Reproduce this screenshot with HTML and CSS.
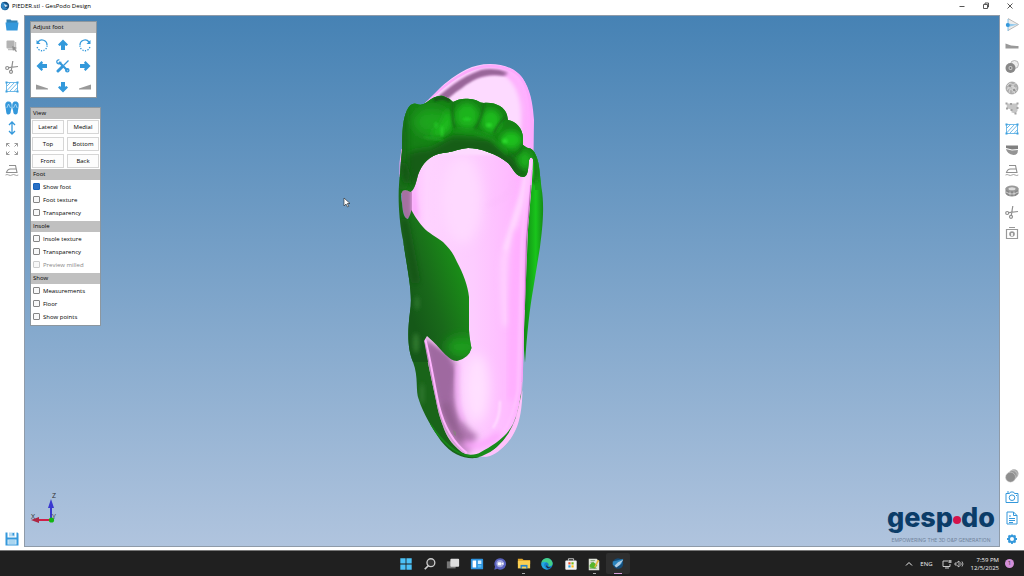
FILE: index.html
```html
<!DOCTYPE html>
<html lang="en">
<head>
<meta charset="utf-8">
<title>PIEDER.stl - GesPodo Design</title>
<link rel="stylesheet" href="styles.css">
</head>
<body>
<svg class="defs" aria-hidden="true">
  <symbol id="texture" viewBox="0 0 14 14"><path d="M1.500 2.500h11v9h-11zM2 10.500 9 3M5 11l7.500-8M2 6l3.500-3.500M9 11.500l3.500-4" fill="none" stroke="#4da8e2" stroke-width=".8"/><path d="M.5 1.500h2v2h-2zM11.500 1.500h2v2h-2zM.5 10.500h2v2h-2zM11.500 10.500h2v2h-2z" fill="#3da0de"/></symbol>
  <symbol id="scissors" viewBox="0 0 14 14"><g fill="none" stroke="#8f8f8f" stroke-width="1.200"><circle cx="2.200" cy="8" r="1.500"/><circle cx="6" cy="11.800" r="1.500"/><path d="M3.700 7.700 13 6.500M6.300 10.300 7.800 1"/></g></symbol>
  <symbol id="iron" viewBox="0 0 14 14"><path d="M4 2.500h6.500l1.500 7H1.500Q2.500 6 5.500 6h5.500" fill="none" stroke="#8f8f8f" stroke-width="1.100"/><path d="M.5 12q1.600-1 3.200 0t3.200 0t3.200 0t3.200 0" fill="none" stroke="#999" stroke-width=".9"/></symbol>
  <symbol id="arrow" viewBox="0 0 14 14"><path d="M7 1.500 12 6.500 10.500 8 9 7.200V12H5V7.200L3.500 8 2 6.500z" fill="#3399db"/></symbol>
  <symbol id="wedge" viewBox="0 0 14 14"><path d="M1 4.500 13 8.500v1H1z" fill="#999"/></symbol>
  <symbol id="turn" viewBox="0 0 14 14"><path d="M3 4A5 5 0 0 1 12 7" fill="none" stroke="#3399db" stroke-width="1.300"/><path d="M12 7.500A5 5 0 0 1 2 8" fill="none" stroke="#3399db" stroke-width="1.300" stroke-dasharray="1.300 1.300"/><path d="M1.500 2v4h4z" fill="#3399db"/></symbol>
</svg>

<header class="titlebar">
  <svg class="app-icon" viewBox="0 0 10 10"><circle cx="5" cy="5" r="4.200" fill="#174f80"/><path d="M2 1 8 4 4 5.500 8 8 3 9 1 5z" fill="#2f86c5"/><path d="M4 3l4 2-3 1z" fill="#dceaf6"/></svg>
  <h1 class="title">PIEDER.stl - GesPodo Design</h1>
  <div class="window-controls">
    <button class="win-btn" aria-label="Minimize"><svg viewBox="0 0 10 10"><path d="M2.500 5.500h5" stroke="#555" /></svg></button>
    <button class="win-btn" aria-label="Restore"><svg viewBox="0 0 10 10"><path d="M2.500 3.500h4v4h-4zM4 3V2h3.500v4H7" fill="none" stroke="#444" stroke-width=".9"/></svg></button>
    <button class="win-btn" aria-label="Close"><svg viewBox="0 0 10 10"><path d="M2.500 2.500l5 5M7.500 2.500l-5 5" stroke="#444" stroke-width=".9"/></svg></button>
  </div>
</header>

<main class="workspace">
  <nav class="sidebar" aria-label="File and foot tools">
    <div class="tools tools-left">
      <button class="tool" aria-label="Open"><svg viewBox="0 0 14 14"><path d="M1.500 1.500h4l1 1h6v2.500h-11z" fill="#3382b3"/><path d="M.5 4.500h13l-1 8h-11z" fill="#3498db"/></svg></button>
      <button class="tool" aria-label="Select"><svg viewBox="0 0 14 14"><rect x="1.500" y="1.500" width="8" height="8" rx="1" fill="#b3b3b3"/><path d="M3 10.500h7.500V3" fill="none" stroke="#c2c2c2" stroke-width="1.500"/><path d="M7 7l5 2-2 .8 2 2.400-1 .8-2-2.500-1 1.500z" fill="#909090"/></svg></button>
      <button class="tool" aria-label="Cut"><svg><use href="#scissors"/></svg></button>
      <button class="tool" aria-label="Texture"><svg><use href="#texture"/></svg></button>
      <button class="tool" aria-label="Insoles"><svg viewBox="0 0 14 14"><path d="M3.400.5C.6.500 0 3 .4 5.500S1 9 1.200 11s1 2.500 2.200 2.500 2.300-1 2.300-2.500S6.700 7.500 6.800 5 6 .5 3.400.5z" fill="#3498db"/><path d="M13.600 5.500C14 3 13.400.5 10.600.5S7.200 2.500 7.200 5s1.100 4.500 1.100 6 1 2.500 2.300 2.500 2.100-1 2.200-2.500.4-3 .8-5.500z" fill="#3498db"/><path d="M1.800 7 3.500 3 5.500 7M8.500 7l2-4 1.700 4" fill="none" stroke="#c9e5f8" stroke-width=".7"/></svg></button>
      <button class="tool" aria-label="Length"><svg viewBox="0 0 14 14"><path d="M7 1v12M4 4l3-3 3 3M4 10l3 3 3-3" fill="none" stroke="#3498db" stroke-width="1.300"/></svg></button>
      <button class="tool" aria-label="Fit to view"><svg viewBox="0 0 14 14"><path d="M1.500 4.500v-3h3M1.500 1.500l3 3M9.500 1.500h3v3M12.500 1.500l-3 3M1.500 9.500v3h3M1.500 12.500l3-3M12.500 9.500v3h-3M12.500 12.500l-3-3" fill="none" stroke="#999"/></svg></button>
      <button class="tool" aria-label="Smooth"><svg><use href="#iron"/></svg></button>
    </div>
    <div class="tools tools-save">
      <button class="tool" aria-label="Save"><svg viewBox="0 0 14 14"><path d="M.5.500h2v5h9v-5h1l1 1v12H.5z" fill="#3498db"/><path d="M4 .5h6v4H4z" fill="#b5daf2"/><path d="M7.500 1h1.500v2.500H7.500z" fill="#3498db"/><path d="M2.500 7.500h9v5h-9z" fill="#d8edf9"/><path d="M3.500 9h7M3.500 11h7" stroke="#65b2e3" stroke-width=".8"/></svg></button>
    </div>
  </nav>

  <section class="viewport" aria-label="3D view">
    <svg class="scene" viewBox="24 15 976 532" role="img" aria-label="Foot scan with insole">
      <defs>
        <linearGradient id="pinkBody" x1="400" x2="534" y1="0" y2="0" gradientUnits="userSpaceOnUse"><stop offset="0" stop-color="#ffb5ff"/><stop offset=".2" stop-color="#fed3ff"/><stop offset=".55" stop-color="#fdccff"/><stop offset=".8" stop-color="#febcff"/><stop offset="1" stop-color="#ffaaff"/></linearGradient>
        <linearGradient id="archFill" x1="402" x2="472" y1="290" y2="265" gradientUnits="userSpaceOnUse"><stop offset="0" stop-color="#155818"/><stop offset=".35" stop-color="#19691a"/><stop offset=".8" stop-color="#1a8a18"/><stop offset="1" stop-color="#1aa31a"/></linearGradient>
        <linearGradient id="side" x1="525" x2="543" y1="0" y2="0" gradientUnits="userSpaceOnUse"><stop offset="0" stop-color="#128c16"/><stop offset=".6" stop-color="#19c51b"/><stop offset="1" stop-color="#168d18"/></linearGradient>
        <filter id="b1" x="-50%" y="-50%" width="200%" height="200%"><feGaussianBlur stdDeviation="1"/></filter>
        <filter id="b2" x="-60%" y="-60%" width="220%" height="220%"><feGaussianBlur stdDeviation="2"/></filter>
        <filter id="b3" x="-80%" y="-80%" width="260%" height="260%"><feGaussianBlur stdDeviation="3"/></filter>
        <filter id="b6" x="-80%" y="-80%" width="260%" height="260%"><feGaussianBlur stdDeviation="6"/></filter>
        <path id="insole" d="M425 103C434 95 440 87 447 82C460 72 472 64 490 64C506 64 519 70 525 82C532 95 533 108 534 120L533.500 150L532 180L528 230L526 280L524 330L523 370C522 395 521 415 516 428C510 441 501 452 490 456C483 458 476 456 470 455C463 454 460 451 456 447C449 441 445 432 443 426C438 413 437 405 435 396L428 363L424 341Q423 335 427 336L440 300L412 220L400 190L412 140z"/>
        <path id="fore" d="M402 150C402 130 403 119 407 110Q411 102 417 104Q422 106 427 102C433 97 439 95 443 96Q449 98 453 102C458 99 464 98 470 99C477 99 479 103 484 103C495 102 505 107 507 115L508 120C516 121 523 129 523 138L523 145Q527 148 528 148C535 148 539 160 540 175L541 190H535L534 163Q532 154 529 160C528 166 529 177 523 177C516 177 513 168 508 163C497 154 480 148 468 148C457 149 450 153 443 153C429 155 422 164 418 175C416 183 414 191 410.500 192Q406 189 402.500 191Q400 195 402 203Q403 219 408 219Q410 216 411.500 210C414 215 417 220 423 227C428 233 437 237 443 242C450 249 453 253 457 262C463 273 468 286 469 297L469 330Q470 342 471.500 348Q469 358 457 361C449 361 442 350 433 341.500L427 336L424 341L428 362L413 362C408 350 407 335 410 312C413 294 408 274 403 240C399 220 398 200 399 185z"/>
        <path id="heel" d="M403 240C408 274 413 294 410 312C407 335 408 350 413 362C419 378 415 390 419 400C423 413 432 428 441 441C452 455 464 459 476 458C489 455 501 446 510 434L521 400L440 396L424 340z"/>
        <clipPath id="clipInsole"><use href="#insole"/></clipPath>
        <clipPath id="clipFore"><use href="#fore"/></clipPath>
        <clipPath id="clipHeel"><use href="#heel"/></clipPath>
      </defs>

      <path d="M524 142C533 147 538 157 539 167L541.500 188C545 207 542 232 540 247L533 290Q528 318 525 363L520 300z" fill="url(#side)"/>
      <path d="M537 165Q540 185 537 186L533 182z" fill="#156c18" filter="url(#b1)"/>
      <use href="#heel" fill="#196419"/>
      <g clip-path="url(#clipHeel)"><ellipse cx="422" cy="394" rx="2" ry="11" fill="#337a31" filter="url(#b2)"/><path d="M430 424Q449 452 468 456Q489 456 504 440" fill="none" stroke="#168719" stroke-width="2"/></g>

      <use href="#insole" fill="url(#pinkBody)"/>
      <g clip-path="url(#clipInsole)">
        <path d="M440 104L465 84Q484 73 506 76Q520 82 524 108L522 155H430z" fill="#fddaff" filter="url(#b1)"/>
        <path d="M428 105C446 90 460 77 481 70Q494 67 507 72Q511 76 503 76C486 73 473 79 462 88Q449 96 441 107z" fill="#99669a" filter="url(#b1)"/>
        <path d="M425 103C438 92 463 66 490 66Q517 67 524 83C531 97 532 112 532 150" fill="none" stroke="#fdaafd" stroke-width="2.500"/>
        <path d="M506 73Q524 86 524 120L522 151" fill="none" stroke="#fdb0fd" stroke-width="5" filter="url(#b2)"/>
        <ellipse cx="462" cy="200" rx="20" ry="44" fill="#fed9ff" filter="url(#b6)"/>
        <path d="M486 206Q500 201 508 194Q512 190 514 180" fill="none" stroke="#f9baf9" stroke-width="2" filter="url(#b3)"/>
        <path d="M531 155L525 194Q511 230 504 260Q503 290 506 326" fill="none" stroke="#ffd8ff" stroke-width="5" filter="url(#b3)"/>
        <path d="M529 163L519 205L505 250" fill="none" stroke="#ffe9ff" stroke-width="2" filter="url(#b2)"/>
        <path d="M519 230L514 300L512 400" fill="none" stroke="#ffaeff" stroke-width="9" filter="url(#b3)"/>
        <path d="M532 170L526 240L524 310L522 382" fill="none" stroke="#f4a0f6" stroke-width="1.500"/>
        <path d="M528 168L522 240L520 310L518 390Q512 424 497 441" fill="none" stroke="#ffc3ff" stroke-width="2" filter="url(#b1)"/>
        <path d="M531 185L526.500 242L525 310" fill="none" stroke="#94648f" stroke-width=".8"/>
        <path d="M420 335L446 354L456 362L457 405Q461 425 478 436L467 455Q446 440 438 413z" fill="#b077b1" filter="url(#b3)"/>
        <path d="M427 341L448 356L454 371L451 397L458 432Q443 420 437 393z" fill="#9f69a0" filter="url(#b2)"/>
        <path d="M445 403Q450 425 462 440" fill="none" stroke="#8b5b88" stroke-width="5" filter="url(#b3)"/>
        <path d="M458 365Q455 402 464 421" fill="none" stroke="#fbacff" stroke-width="3" filter="url(#b2)"/>
        <ellipse cx="477" cy="388" rx="12" ry="34" fill="#ffe0ff" filter="url(#b6)"/>
        <path d="M464 444Q480 451 500 434" fill="none" stroke="#fba5fc" stroke-width="7" filter="url(#b3)"/>
        <path d="M500 401Q500 419 493 428" fill="none" stroke="#ffe0ff" stroke-width="2" filter="url(#b1)"/>
        <path d="M425 338C431 361 434 384 439 406Q447 438 467 453" fill="none" stroke="#ffb4ff" stroke-width="2"/>
        <path d="M453 430l3 2v4l-2-1z" fill="#8c7c86"/>
      </g>
      <path d="M522 380Q521 407 513 424C505 439 491 446 481 452Q475 456 464 454Q472 460 482 456Q498 450 508 434Q517 420 521 397z" fill="#198c1c"/>
      <path d="M522.500 390Q522 416 516 429C510 443 500 452 484 457Q506 443 515 423z" fill="#ffc2fb"/>
      <path d="M402 149Q399 162 400 177" fill="none" stroke="#f6a4f4"/>
      <path d="M402.500 191Q406 189 412 192V211Q410 219 406 219Q401 210 402 191z" fill="#a571a1"/>
      <path d="M412 188L415 184L419 220L412 212z" fill="#fba8fc" filter="url(#b2)"/>

      <use href="#fore" fill="url(#archFill)"/>
      <g clip-path="url(#clipFore)">
        <path d="M402 90H540V180H510L470 152L405 165z" fill="#188018" filter="url(#b3)"/>
        <ellipse cx="432" cy="122" rx="19" ry="14" fill="#1ba51c" filter="url(#b6)"/>
        <path d="M447 108Q455 119 450 130Q442 138 430 135L442 122z" fill="#1bbb1c" filter="url(#b3)"/>
        <path d="M400 160Q405 150 430 149L452 137L490 139L514 158L531 180L465 156L430 162L414 190z" fill="#165d18" filter="url(#b3)"/>
        <path d="M424 137L443 140" stroke="#20a522" stroke-width="1.500" filter="url(#b1)"/>
        <ellipse cx="467" cy="116" rx="12" ry="13" fill="#1bb41c" filter="url(#b3)"/>
        <ellipse cx="491" cy="121" rx="10" ry="12" fill="#1aba1c" filter="url(#b3)"/>
        <ellipse cx="511" cy="140" rx="11" ry="9" fill="#1ac01c" filter="url(#b3)"/>
        <ellipse cx="525" cy="160" rx="7" ry="9" fill="#1aae1c" filter="url(#b3)"/>
        <path d="M453 101Q451 117 455 130M484 102Q482 119 475 129M507 116Q499 122 494 133M523 145Q520 154 512 156" fill="none" stroke="#166e18" stroke-width="2" filter="url(#b1)"/>
        <path d="M453 130L475 132L491 138L508 154" fill="none" stroke="#1a9c1c" stroke-width="3" filter="url(#b2)"/>
        <path d="M434 100Q444 95 450 101" fill="none" stroke="#145719" stroke-width="4" filter="url(#b1)"/>
        <ellipse cx="442" cy="131" rx="1.500" ry="6" fill="#25c925" filter="url(#b1)"/><ellipse cx="436" cy="125" rx="1.500" ry="3" fill="#24c025" filter="url(#b1)"/><ellipse cx="467" cy="119" rx="4" ry="1.500" fill="#26cc28" filter="url(#b1)"/><ellipse cx="489" cy="125" rx="3" ry="2" fill="#2cd52c" filter="url(#b1)"/><ellipse cx="505" cy="141" rx="3" ry="2.500" fill="#2ad52a" filter="url(#b1)"/>
        <ellipse cx="403" cy="145" rx="5" ry="46" fill="#166b18" filter="url(#b3)"/>
        <path d="M402 163L408 183M404 219L416 283" stroke="#124e16" stroke-width="5" filter="url(#b3)"/>
        <ellipse cx="417" cy="303" rx="2" ry="7" fill="#2f7a2f" filter="url(#b2)"/>
        <ellipse cx="462" cy="347" rx="16" ry="10" fill="#1a9f1b" filter="url(#b6)"/>
        <ellipse cx="416" cy="343" rx="3" ry="10" fill="#307a2f" filter="url(#b2)"/>
      </g>

      <g class="axes"><path d="M51 519V507" stroke="#3939d0" stroke-width="2"/><path d="M51 499l3 9h-6z" fill="#3939d0"/><path d="M50 520H38" stroke="#cf1e48" stroke-width="2"/><path d="M31 520l8-3v6z" fill="#ad2643"/><circle cx="51.500" cy="520" r="2.600" fill="#12b512"/><text x="52" y="498">Z</text><text x="31" y="519">X</text><text x="52" y="519">Y</text></g>
      <path d="M344 198v8l2-2 1.500 3 1.200-.6-1.400-2.900h2.700z" fill="#fff" stroke="#222" stroke-width=".6"/>
    </svg>

    <div class="panels">
      <section class="panel panel-adjust">
        <h2 class="panel-head">Adjust foot</h2>
        <div class="adjust-grid">
          <button class="adjust" aria-label="Rotate left"><svg><use href="#turn"/></svg></button>
          <button class="adjust" aria-label="Move up"><svg><use href="#arrow"/></svg></button>
          <button class="adjust" aria-label="Rotate right"><svg class="flip"><use href="#turn"/></svg></button>
          <button class="adjust" aria-label="Move left"><svg class="left"><use href="#arrow"/></svg></button>
          <button class="adjust" aria-label="Settings"><svg viewBox="0 0 14 14"><path d="M3 3l8.500 8.500" stroke="#3498db" stroke-width="2.200"/><circle cx="2.800" cy="2.800" r="2" fill="none" stroke="#3498db" stroke-width="1.300" stroke-dasharray="9 4"/><circle cx="11.300" cy="11.300" r="1.600" fill="none" stroke="#3498db" stroke-width="1.400"/><path d="M12.500 1.500 7.500 6.500" stroke="#3498db" stroke-width="1.300"/><path d="M5.800 8.200 2 12" stroke="#3498db" stroke-width="3" stroke-linecap="round"/></svg></button>
          <button class="adjust" aria-label="Move right"><svg class="right"><use href="#arrow"/></svg></button>
          <button class="adjust" aria-label="Tilt left"><svg><use href="#wedge"/></svg></button>
          <button class="adjust" aria-label="Move down"><svg class="down"><use href="#arrow"/></svg></button>
          <button class="adjust" aria-label="Tilt right"><svg class="flip"><use href="#wedge"/></svg></button>
        </div>
      </section>

      <section class="panel panel-view">
        <h2 class="panel-head">View</h2>
        <div class="view-grid">
          <button class="view-btn">Lateral</button><button class="view-btn">Medial</button>
          <button class="view-btn">Top</button><button class="view-btn">Bottom</button>
          <button class="view-btn">Front</button><button class="view-btn">Back</button>
        </div>
        <h2 class="panel-head">Foot</h2>
        <div class="checks">
          <label class="check"><input type="checkbox" checked>Show foot</label>
          <label class="check"><input type="checkbox">Foot texture</label>
          <label class="check"><input type="checkbox">Transparency</label>
        </div>
        <h2 class="panel-head">Insole</h2>
        <div class="checks">
          <label class="check"><input type="checkbox">Insole texture</label>
          <label class="check"><input type="checkbox">Transparency</label>
          <label class="check check-off"><input type="checkbox" disabled>Preview milled</label>
        </div>
        <h2 class="panel-head">Show</h2>
        <div class="checks">
          <label class="check"><input type="checkbox">Measurements</label>
          <label class="check"><input type="checkbox">Floor</label>
          <label class="check"><input type="checkbox">Show points</label>
        </div>
      </section>
    </div>

    <div class="brand">
      <div class="brand-name"><span>gesp</span><i class="brand-dot"></i><span>do</span></div>
      <div class="brand-line">EMPOWERING THE 3D O&amp;P GENERATION</div>
    </div>
  </section>

  <nav class="sidebar" aria-label="Insole tools">
    <div class="tools tools-right">
      <button class="tool" aria-label="Plane"><svg viewBox="0 0 14 14"><path d="M3 .5 13.500 6.500 3 12.500" fill="#ececec" stroke="#aaa" stroke-width=".8"/><path d="M1 5.500 13.500 6.500 3 9z" fill="#91caee"/><path d="M3 1v12" stroke="#65b2e3" stroke-width=".8"/><circle cx="2.800" cy="7" r="2" fill="#3498db"/></svg></button>
      <button class="tool" aria-label="Wedge"><svg viewBox="0 0 14 14"><path d="M.5 4.500Q7 7.500 13.500 7v2.500H.5z" fill="#999"/></svg></button>
      <button class="tool" aria-label="Combine"><svg viewBox="0 0 14 14"><circle cx="9.500" cy="4.500" r="4" fill="#eee" stroke="#aaa" stroke-width=".8"/><circle cx="5.500" cy="8" r="5" fill="#888"/><circle cx="5.500" cy="8" r="2" fill="#ccc"/><circle cx="5.500" cy="8" r="1" fill="#777"/></svg></button>
      <button class="tool" aria-label="Lattice"><svg viewBox="0 0 14 14"><circle cx="7" cy="7" r="6" fill="#b0b0b0" stroke="#999" stroke-width=".7"/><path d="M2 5l3-3 3 2 3-2M2 9l3-4 4 1 3 4M4 12l1-4 4 2 1 3M8 4v8M2 7h10" fill="none" stroke="#e4e4e4" stroke-width=".7"/><circle cx="5" cy="5" r="1" fill="#888"/><circle cx="9" cy="9" r="1" fill="#888"/></svg></button>
      <button class="tool" aria-label="Element"><svg viewBox="0 0 14 14"><path d="M1.500 2.500H12.500V10l-2 2.500-4-1V8.500L2 7.500z" fill="#c6c6c6"/><path d="M.5 1.500h2v2h-2zM5 2h2v2H5zM11.500 1.500h2v2h-2zM1 6.500h2v2H1zM5.500 8h2v2h-2zM11.500 6h2v2h-2zM9.500 11.500h2v2h-2z" fill="#a2a2a2"/></svg></button>
      <button class="tool" aria-label="Insole texture"><svg><use href="#texture"/></svg></button>
      <button class="tool" aria-label="Block"><svg viewBox="0 0 14 14"><path d="M1 2.500h12v3.500L7 6.500 1 5z" fill="#808080"/><path d="M1 6l6 1.500 6-.5Q13 12 8.500 12 2 11 1 6z" fill="#949494"/></svg></button>
      <button class="tool" aria-label="Smooth insole"><svg><use href="#iron"/></svg></button>
      <button class="tool" aria-label="Layers"><svg viewBox="0 0 14 14"><path d="M.5 4.500v5Q2 12.500 7 12.500t6.500-3v-5z" fill="#888"/><ellipse cx="7" cy="4.500" rx="6.500" ry="3" fill="#999"/><ellipse cx="7" cy="4.800" rx="3.500" ry="1.500" fill="#ddd"/><path d="M1 8q6 4 12 0M5 7.500v4M9 7.500v4" fill="none" stroke="#ddd" stroke-width=".8"/></svg></button>
      <button class="tool" aria-label="Trim"><svg><use href="#scissors"/></svg></button>
      <button class="tool" aria-label="Library"><svg viewBox="0 0 14 14"><path d="M1.500 3.500h11v9h-11zM4 1.500h6M1 3.500h12" fill="none" stroke="#999" stroke-width="1.200"/><circle cx="7" cy="8" r="2.800" fill="#999"/><path d="M6 7h2v3H6z" fill="#eee"/></svg></button>
    </div>
    <div class="tools tools-end">
      <button class="tool" aria-label="Material"><svg viewBox="0 0 14 14"><circle cx="9" cy="4.800" r="4.500" fill="#aaa"/><circle cx="7.500" cy="6.200" r="4.700" fill="#999" stroke="#ddd" stroke-width=".5"/><circle cx="5.500" cy="8.200" r="5" fill="#8e8e8e" stroke="#ddd" stroke-width=".5"/></svg></button>
      <button class="tool" aria-label="Screenshot"><svg viewBox="0 0 14 14"><path d="M1 3.500h3.500l1-1.500h3l1 1.500H13v9H1z" fill="none" stroke="#3498db"/><circle cx="7" cy="7.700" r="2.800" fill="none" stroke="#3498db"/><path d="M2 2h2M11 5.500h1" stroke="#3498db"/></svg></button>
      <button class="tool" aria-label="Report"><svg viewBox="0 0 14 14"><path d="M2 1h6.500L12 4.500V13H2zM8.500 1v3.500H12M4 5h2M4 7.500h6M4 9.500h6M4 11.500h4" fill="none" stroke="#3498db"/></svg></button>
      <button class="tool" aria-label="Preferences"><svg viewBox="0 0 14 14"><circle cx="7" cy="7" r="3" fill="none" stroke="#3498db" stroke-width="2"/><path d="M7 2.500v1.500M7 10v2M2 7h2M10 7h2M3.500 3.500l1.500 1.500M9 9l1.500 1.500M3.500 10.500 5 9M9 5l1.500-1.500" stroke="#3498db" stroke-width="1.800"/></svg></button>
    </div>
  </nav>
</main>

<footer class="taskbar">
  <div class="apps">
    <button class="app" aria-label="Start"><svg viewBox="0 0 16 16"><path d="M1.500 1.500h6v6h-6zM8.500 1.500h6v6h-6zM1.500 8.500h6v6h-6zM8.500 8.500h6v6h-6z" fill="#4cc2f7"/></svg></button>
    <button class="app" aria-label="Search"><svg viewBox="0 0 16 16"><circle cx="9" cy="6.500" r="4.500" fill="#333" stroke="#ccc" stroke-width="1.500"/><path d="M6 10l-4 4" stroke="#ccc" stroke-width="2"/></svg></button>
    <button class="app" aria-label="Task view"><svg viewBox="0 0 16 16"><rect x="1" y="5" width="10" height="8" fill="#777"/><rect x="5" y="2" width="10" height="9" rx="1" fill="#ddd"/></svg></button>
    <button class="app" aria-label="Widgets"><svg viewBox="0 0 16 16"><rect x="1" y="2" width="14" height="12" rx="1" fill="#2f94e0"/><path d="M3 4h4v8H3z" fill="#fff"/><path d="M9 4h4v4H9z" fill="#d3eeff"/><path d="M9 9h4v3H9z" fill="#56bcf5"/></svg></button>
    <button class="app" aria-label="Chat"><svg viewBox="0 0 16 16"><path d="M8 1.500a6.500 6.500 0 1 1-3 12l-3.500 1 .8-3.500A6.500 6.500 0 0 1 8 1.500z" fill="#5962bf"/><circle cx="8" cy="7.500" r="4.200" fill="#a0a6dd"/><rect x="5.500" y="6" width="4" height="3.500" rx="1" fill="#fff"/><path d="M10 7l2-1v3l-2-1z" fill="#fff"/></svg></button>
    <button class="app app-open" aria-label="File Explorer"><svg viewBox="0 0 16 16"><path d="M1 2h5l1.500 1.500H15V8H1z" fill="#e3a72b"/><path d="M1 4.500h14V13H1z" fill="#fbd052"/><path d="M4 9h8v4H4z" fill="#2582cb"/><path d="M5.500 11h5v2h-5z" fill="#fbd052"/></svg></button>
    <button class="app" aria-label="Edge"><svg viewBox="0 0 16 16"><circle cx="8" cy="8" r="6.500" fill="#1680cb"/><path d="M1.500 7.500A6.500 6.500 0 0 1 14.500 8Q14 11 9.500 10.500Q11 7 7 6Q3 5.500 1.500 7.500z" fill="#43cf8a"/><path d="M1.500 7.500Q4 4.500 7 6Q3 8 6 12l3 2.500Q1.500 14 1.500 7.500z" fill="#23a9df"/><path d="M8 8.500Q7.500 12 12.500 12 9 14 7 11z" fill="#202b3a"/></svg></button>
    <button class="app" aria-label="Microsoft Store"><svg viewBox="0 0 16 16"><path d="M5 4V2h6v2" fill="none" stroke="#ddd"/><rect x="1.500" y="4" width="13" height="10.500" rx="1" fill="#f4f4f4"/><path d="M5 6h2.500v2.500H5z" fill="#ef5127"/><path d="M8.500 6H11v2.500H8.500z" fill="#7cba16"/><path d="M5 9.500h2.500V12H5z" fill="#22a4e8"/><path d="M8.500 9.500H11V12H8.500z" fill="#fdb910"/></svg></button>
    <button class="app app-open" aria-label="Notepad++"><svg viewBox="0 0 16 16"><path d="M2 2h9l3 3v10H2z" fill="#e1e5db"/><path d="M4 4h5M4 6h4M3 13h8" stroke="#80a673"/><path d="M3 9q3-5 6-2l3 2-3 4-6-1z" fill="#54b52c"/><path d="M12 3l2 1-4 7-2 1z" fill="#e7b93e"/></svg></button>
    <button class="app app-active" aria-label="GesPodo Design"><svg viewBox="0 0 16 16"><circle cx="8" cy="7.500" r="6" fill="#144c78"/><path d="M2 5l5-1 7-2-2 6-5 3-5-2z" fill="#2a83bd"/><path d="M4 10l4-4 6-3-4 6-4 3z" fill="#afcde5"/></svg></button>
  </div>
  <div class="tray">
    <button class="tray-btn" aria-label="Show hidden icons"><svg viewBox="0 0 10 10"><path d="M2 6.500l3-3 3 3" fill="none" stroke="#eee"/></svg></button>
    <span class="lang">ENG</span>
    <button class="tray-btn tray-pair" aria-label="Network and volume"><svg viewBox="0 0 10 10"><path d="M6 2H1v5.500h7V5M3 9h4" fill="none" stroke="#ddd" stroke-width=".9"/><path d="M6.500 1h3v3h-3z" fill="#aaa"/></svg><svg viewBox="0 0 10 10"><path d="M1 4h1.500L5 2v6L2.500 6H1zM6.500 3.500q1.500 1.500 0 3M8 2.500q2 2.500 0 5" fill="none" stroke="#ddd" stroke-width=".8"/></svg></button>
    <time class="clock">7:59 PM<br>12/5/2025</time>
    <span class="badge">1</span>
  </div>
</footer>
</body>
</html>
```
FILE: styles.css
```css
* { box-sizing: border-box; }

body {
  margin: 0;
  height: 100vh;
  display: flex;
  flex-direction: column;
  background: #fff;
  color: #000;
  font: 500 6px/8px "Open Sans", "Noto Sans", sans-serif;
  overflow: hidden;
}

button {
  margin: 0;
  padding: 0;
  border: 0;
  background: none;
  color: inherit;
  font: inherit;
  display: flex;
  align-items: center;
  justify-content: center;
}

.defs { display: none; }

.titlebar {
  flex: none;
  height: 15px;
  padding: 0 2px 3px 0;
  display: flex;
  align-items: center;
}
.app-icon { width: 10px; height: 10px; margin-right: 2px; }
.title { margin: 0; font: inherit; }
.window-controls { margin-left: auto; display: flex; }
.win-btn { width: 24px; height: 12px; }
.win-btn svg { width: 10px; height: 10px; }

.workspace { flex: 1; min-height: 0; display: flex; }

.sidebar {
  flex: none;
  width: 24px;
  padding-bottom: 1px;
  display: flex;
  flex-direction: column;
  justify-content: space-between;
}
.tools { display: grid; grid-auto-rows: 1fr; }
.tools-left { height: 165px; }
.tools-right { height: 228px; }
.tools-end { height: 83px; }
.tools-save { height: 21px; }
.tool svg { width: 14px; height: 14px; }

.viewport {
  flex: 1;
  min-width: 0;
  position: relative;
  margin-bottom: 3px;
  background: linear-gradient(#4682b4, #b0c4de);
  box-shadow: inset 0 0 0 1px #8f9ba9;
}
.scene {
  position: absolute;
  inset: 0;
  width: 100%;
  height: 100%;
}
.axes { font: 7px "Open Sans", sans-serif; fill: #333; }

.panels {
  position: absolute;
  top: 6px;
  left: 6px;
  display: flex;
  flex-direction: column;
  align-items: flex-start;
  gap: 9px;
}
.panel { background: #fff; border: 1px solid #8d979f; }
.panel-adjust { width: 67px; }
.panel-view { width: 71px; }
.panel-head {
  margin: 0;
  padding: 0 2px;
  background: #c0c0c0;
  font: inherit;
  line-height: 11px;
}
.adjust-grid {
  display: grid;
  grid-template-columns: repeat(3, 1fr);
  grid-auto-rows: 21px;
  padding-top: 1px;
}
.adjust svg { width: 14px; height: 14px; }
.flip { transform: scaleX(-1); }
.left { transform: rotate(-90deg); }
.right { transform: rotate(90deg); }
.down { transform: rotate(180deg); }

.view-grid {
  display: grid;
  grid-template-columns: 1fr 1fr;
  gap: 3px;
  padding: 1px;
}
.view-btn { height: 14px; border: 1px solid #d6d6d6; background: #fdfdfd; }

.checks { padding: 0 2px 2px; }
.check { display: flex; align-items: center; gap: 3px; height: 13px; white-space: nowrap; }
.check-off { color: #888; }
.check input {
  appearance: none;
  flex: none;
  width: 7px;
  height: 7px;
  margin: 0;
  border: 1px solid #858585;
  border-radius: 1px;
  background: #f8f8f8;
}
.check input:checked {
  border-color: #1562bd;
  background: #2a70c4;
}
.check input:disabled { border-color: #ccc; }

.brand {
  position: absolute;
  right: 5px;
  bottom: 4px;
  display: flex;
  flex-direction: column;
  align-items: center;
}
.brand-name {
  display: flex;
  align-items: center;
  color: #0b3c68;
  font: 800 27px/38px Inter, sans-serif;
}
.brand-dot {
  width: 8px;
  height: 8px;
  margin-top: 4px;
  border-radius: 50%;
  background: #d4134c;
}
.brand-line { color: #71839c; font: 5px/6px Inter, sans-serif; white-space: nowrap; }

.taskbar {
  flex: none;
  height: 26px;
  display: grid;
  grid-template-columns: 1fr 235px 1fr;
  border-top: 1px solid #777;
  background: #202020;
  color: #f2f2f2;
}
.apps {
  grid-column: 2;
  display: grid;
  grid-template-columns: repeat(10, 1fr);
}
.app { position: relative; }
.app svg { width: 14px; height: 14px; }
.app-active { margin: 2px 0; border-radius: 2px; background: #2e2e2e; }
.app-open::after,
.app-active::after {
  content: "";
  position: absolute;
  bottom: 2px;
  width: 3px;
  height: 1px;
  background: #aaa;
}
.app-active::after { bottom: 0; width: 8px; background: #d9a0dc; }

.tray {
  grid-column: 3;
  justify-self: end;
  display: flex;
  align-items: center;
  padding-right: 10px;
}
.tray-btn svg { width: 10px; height: 10px; }
.tray-pair { gap: 2px; margin: 0 7px 0 9px; }
.lang { margin-left: 6px; }
.clock { text-align: right; }
.badge {
  width: 9px;
  height: 9px;
  margin-left: 6px;
  border-radius: 50%;
  background: #d38fd8;
  color: #333;
  text-align: center;
}
```
